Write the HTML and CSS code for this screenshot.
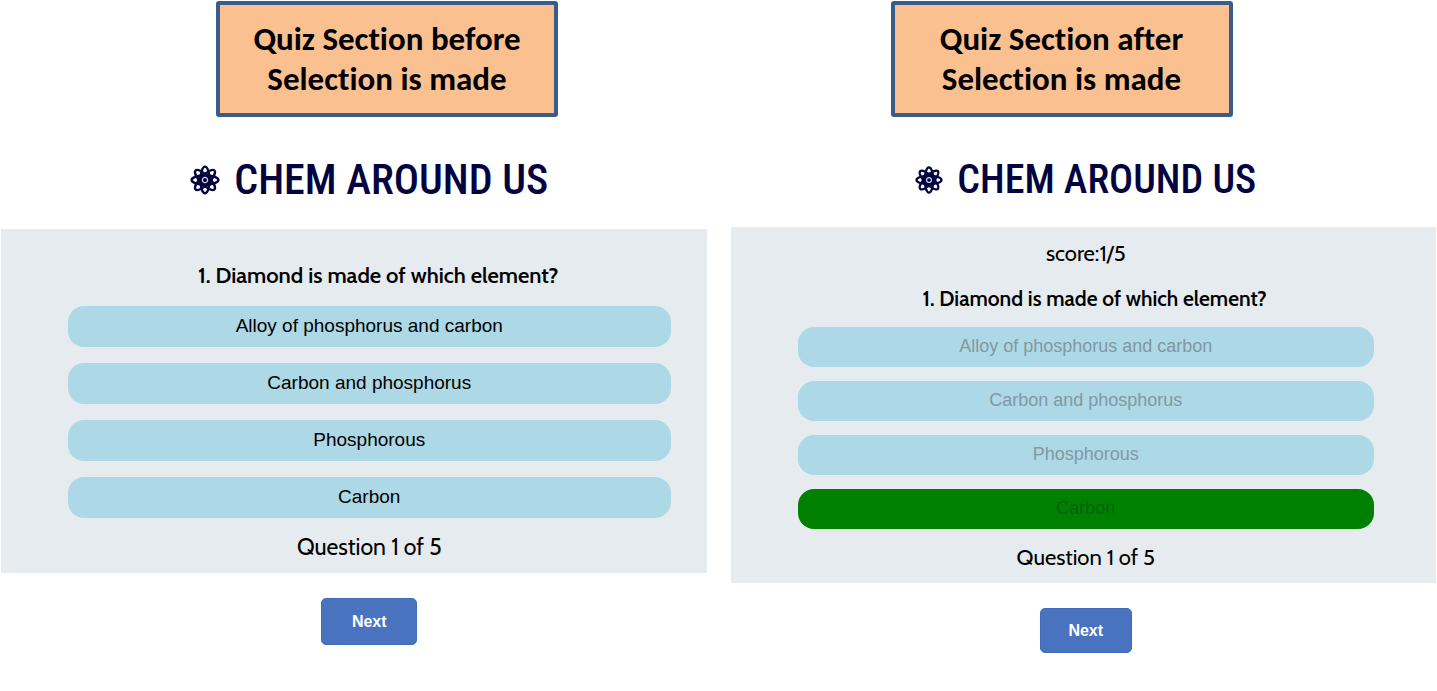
FILE: index.html
```html
<!DOCTYPE html>
<html lang="en">
<head>
<meta charset="utf-8">
<title>Chem Around Us</title>
<link rel="stylesheet" href="styles.css">
</head>
<body>
<svg class="symbols" aria-hidden="true">
  <symbol id="atom" viewBox="-15 -15 30 30">
    <g fill="none" stroke="currentColor" stroke-width="2.4">
      <ellipse rx="4.6" ry="13.4"/>
      <ellipse rx="4.6" ry="13.4" transform="rotate(45)"/>
      <ellipse rx="4.6" ry="13.4" transform="rotate(90)"/>
      <ellipse rx="4.6" ry="13.4" transform="rotate(135)"/>
    </g>
    <circle r="7" fill="currentColor"/>
    <circle r="2.6" fill="none" stroke="#d4d7e6" stroke-width="1.3"/>
  </symbol>
</svg>
<main class="compare">
  <section class="demo before">
    <h2 class="caption">Quiz Section before<br>Selection is made</h2>
    <h1 class="brand"><svg class="logo" aria-hidden="true"><use href="#atom"/></svg>CHEM AROUND US</h1>
    <div class="panel">
      <p class="question">1. Diamond is made of which element?</p>
      <div class="options">
        <button class="option" type="button">Alloy of phosphorus and carbon</button>
        <button class="option" type="button">Carbon and phosphorus</button>
        <button class="option" type="button">Phosphorous</button>
        <button class="option" type="button">Carbon</button>
      </div>
      <p class="progress">Question 1 of 5</p>
    </div>
    <div class="actions"><button class="next" type="button">Next</button></div>
  </section>
  <section class="demo after">
    <h2 class="caption">Quiz Section after<br>Selection is made</h2>
    <h1 class="brand"><svg class="logo" aria-hidden="true"><use href="#atom"/></svg>CHEM AROUND US</h1>
    <div class="panel">
      <p class="score">score:1/5</p>
      <p class="question">1. Diamond is made of which element?</p>
      <div class="options">
        <button class="option" type="button" disabled>Alloy of phosphorus and carbon</button>
        <button class="option" type="button" disabled>Carbon and phosphorus</button>
        <button class="option" type="button" disabled>Phosphorous</button>
        <button class="option correct" type="button" disabled>Carbon</button>
      </div>
      <p class="progress">Question 1 of 5</p>
    </div>
    <div class="actions"><button class="next" type="button">Next</button></div>
  </section>
</main>
</body>
</html>
```
FILE: styles.css
```css
* { box-sizing: border-box; }
body {
  margin: 0;
  background: #fff;
  color: #000;
  font-family: Cabin, Lato, sans-serif;
}
h1, h2, p { margin: 0; }
.symbols { display: none; }
.compare {
  display: grid;
  grid-template-columns: 1fr 1fr;
  gap: 24px;
  padding: 1px 1px 0;
}
.demo { display: flex; flex-direction: column; }
.caption {
  width: 342px;
  padding: 14px 0;
  border: 4px solid #385d8a;
  border-radius: 3px;
  background: #fac090;
  font: bold 33px/40px Calibri, Carlito, "Open Sans", sans-serif;
  font-variant-ligatures: none;
  text-align: center;
}
.before .caption { margin-left: 215px; }
.after .caption { margin-left: 160px; }
.brand, .panel, .actions { padding-left: 67px; }
.before .brand, .before .panel, .before .actions { padding-right: 36px; }
.after .brand, .after .panel, .after .actions { padding-right: 62px; }
.brand {
  display: flex;
  align-items: center;
  justify-content: center;
  gap: 14px;
  margin-top: 39px;
  color: #03033f;
  font: 500 42px/48px "Roboto Condensed", Roboto, sans-serif;
  white-space: nowrap;
}
.logo { width: 30px; height: 30px; }
.after .brand { font-size: 40px; }
.after .logo { width: 28px; height: 28px; }
.panel { background: #e6ebef; text-align: center; }
.before .panel { margin-top: 25px; padding-top: 32px; padding-bottom: 12px; }
.after .panel { margin-top: 23px; padding-top: 13px; padding-bottom: 11px; }
.question {
  padding-left: 18px;
  font-size: 22px;
  line-height: 30px;
  font-weight: 600;
}
.score, .progress { font-size: 23px; line-height: 28px; }
.after .score, .after .progress { font-size: 22px; }
.after .question { font-size: 21px; }
.score { margin-bottom: 16px; }
.options { display: flex; flex-direction: column; }
.before .options { gap: 16px; margin: 15px 0; }
.after .options { gap: 14px; margin: 13px 0 15px; }
.option {
  width: 100%;
  height: 41px;
  padding: 0 8px 2px;
  border: 0;
  border-radius: 16px;
  background: #add8e6;
  color: #000;
  font: 19px/24px "Liberation Sans", Arial, sans-serif;
}
.after .option { height: 40px; font-size: 18px; }
.option:disabled { color: #8199a2; }
.option.correct { background: #008000; color: #066006; }
.actions { display: flex; justify-content: center; margin-top: 25px; }
.next {
  width: 96px;
  height: 47px;
  border: 1px solid #426dbb;
  border-radius: 5px;
  background: #4a73bf;
  color: #fff;
  font: bold 16px/24px "Liberation Sans", Arial, sans-serif;
}
.after .next { width: 92px; height: 45px; }
```
